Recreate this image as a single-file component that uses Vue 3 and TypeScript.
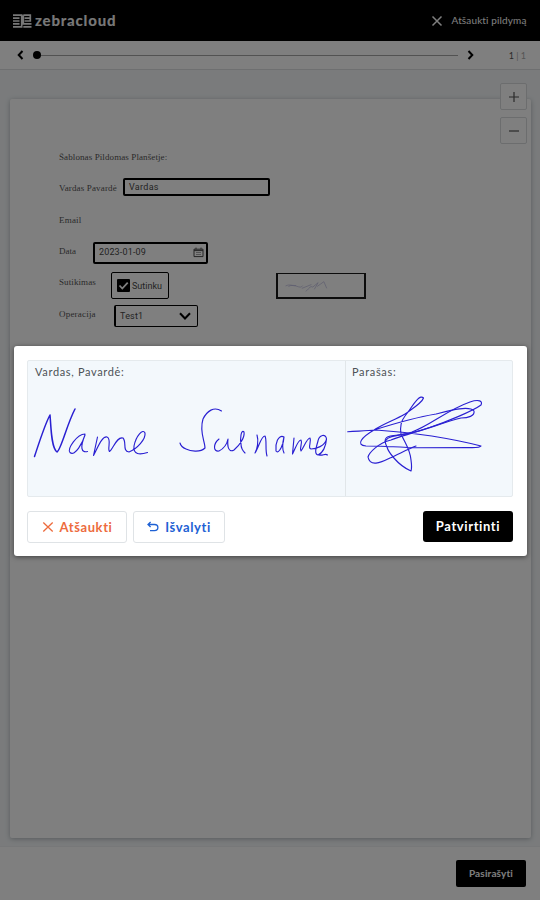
<script setup lang="ts">
import { ref } from 'vue'

const fullName = ref('Vardas')
const agreed = ref(true)
</script>

<template>
  <div class="screen">
    <header class="topbar">
      <div class="brand">
        <svg class="brand-mark" viewBox="0 0 19 14" aria-hidden="true">
          <path d="M0 1.2H8.7V12.8H0M0 4.1H6.5M0 7H6.5M0 9.9H6.5M10.3 1.2H17.3V7H11.6M11.6 4.1H17.3M10.3 1.2V9.9H18.5M10.3 12.8H18.5" />
        </svg>
        <span class="brand-name">zebracloud</span>
      </div>
      <div class="cancel">
        <svg viewBox="0 0 12 12" aria-hidden="true"><path d="M1.5 1.5L10.5 10.5M10.5 1.5L1.5 10.5" /></svg>
        <span>Atšaukti pildymą</span>
      </div>
    </header>

    <nav class="progress">
      <svg class="chevron" viewBox="0 0 7 10"><path d="M5.5 1L1.7 5L5.5 9" /></svg>
      <div class="track"><i class="dot"></i><i class="line"></i></div>
      <svg class="chevron" viewBox="0 0 7 10"><path d="M1.5 1L5.3 5L1.5 9" /></svg>
      <span class="pages">1 <em>| 1</em></span>
    </nav>

    <main class="workspace">
      <section class="page">
        <div class="row title"><span>Šablonas Pildomas Planšetje:</span></div>
        <div class="row name">
          <label>Vardas Pavardė</label>
          <div class="box name-box">{{ fullName }}</div>
        </div>
        <div class="row email"><label>Email</label></div>
        <div class="row date">
          <label>Data</label>
          <div class="box date-box">
            <span>2023-01-09</span>
            <svg viewBox="0 0 11 11"><path d="M1 2.2H10V9.6H1ZM1 3.6H10M3 .6V2.4M8 .6V2.4" /><path class="thin" d="M3 5.5H8M3 7.5H8" /></svg>
          </div>
        </div>
        <div class="row consent">
          <label>Sutikimas</label>
          <div class="box check-box">
            <svg viewBox="0 0 13 13"><rect width="13" height="13" rx="1" /><path v-if="agreed" d="M2.5 6.5L5.3 9.5L10.7 3.6" /></svg>
            <span>Sutinku</span>
          </div>
          <div class="box mini-sign">
            <svg viewBox="0 0 88 24">
              <path d="M7 12.5C12 10 14 13 18 12M10 13C17 9 22 17 25 12M24 15L34 11M28 18C31 17 31 13 35 13M35 14L41 9L37 16M40 13L47 8L50 15" />
            </svg>
          </div>
        </div>
        <div class="row operation">
          <label>Operacija</label>
          <div class="box select-box">
            <span>Test1</span>
            <svg viewBox="0 0 12 8"><path d="M1 1.2L6 6.5L11 1.2" /></svg>
          </div>
        </div>
      </section>
      <div class="zoom-controls">
        <button><svg viewBox="0 0 12 12"><path d="M1 6H11M6 1V11" /></svg></button>
        <button><svg viewBox="0 0 12 12"><path d="M1 6H11" /></svg></button>
      </div>
    </main>

    <footer class="bottombar"><button class="sign">Pasirašyti</button></footer>

    <div class="backdrop">
      <div class="modal">
        <div class="pads">
          <div class="pad"><span>Vardas, Pavardė:</span></div>
          <div class="pad"><span>Parašas:</span></div>
          <svg class="ink" viewBox="27 360 486 137" aria-hidden="true">
            <path class="heavy" d="M34.5 456.5C39 443 45 424 50 415C51 425 51 448 57 452C61 450 67 424 75 409" />
            <path d="M85 434C77 434 67 449 70 452.5C75 457 83 442 85 435C80 447 81 453 87.5 451.5" />
            <path d="M97.5 437L93.5 455.5C98 447 102 436 107 437C112 439 107 449 109.5 451.5C113 449 117 436 123 438C127 442 122 451 129 452C137 449 146 439 145 433C143 428 136 436 134 446C133 455 140 455 147.5 452.5" />
            <path d="M221.5 411C214 406 207 411 203 419C199 432 205 441 205 448C200 453 190 451 186 449Q181 447 180 443" />
            <path d="M219 439C213 444 213 452 219 451C225 448 227 444 228 439C227 447 229 453 234 450C240 445 245 437 244 432C241 429 240 439 241 444C241 449 243 451 245 453" />
            <path d="M257 435C259 441 257 450 255 453C259 447 261 436 265 436C267 440 265 449 267 456" />
            <path d="M284 437C278 434 275 444 276 451C279 455 284 443 284 437C282 445 282 449 284 453" />
            <path d="M294 438L292.5 454C296 447 298 440 301 440C303 443 299 448 301 451C304 447 307 438 310 438C312 442 307 448 311 449C316 449 325 446 326.5 439C326 433 319 435 318 441C316 448 314 454 318 455C323 453 326 446 326.5 439M319 455C323 456 325 453 327.5 455" />
            <path d="M347.7 431.7C359 431 366 431 376 430C404 432 438 435 481 446C480 448 474 447.5 469 447.6L416 447.8C401 447 382 446 366 446C355 445 362 437 374 430C385 423 395 420 405 414C412 409 422 403 423.5 398C419 393 411 409 405 416C401 421 400 428 401 434C406 445 410 449 411 460C412 467 412 468 411 471C397 465 388 451 387 447C382 437 387 436 398 435C417 434 437 424 461 418C468 418 475 416 474 411C469 405 448 411 436 414C418 417 393 424 374 430" />
            <path d="M385 442C387 435 400 436 412 432C431 425 447 410 470 402C479 399 483 401 481 405C473 411 446 422 431 427C411 434 401 436 391 440C378 443 369 453 368 457C370 467 380 463 390 458C399 454 408 449 416 446" />
          </svg>
        </div>
        <div class="actions">
          <button class="outline danger">
            <svg viewBox="0 0 12 12"><path d="M1.3 1.5L10.7 10.5M10.7 1.5L1.3 10.5" /></svg><span>Atšaukti</span>
          </button>
          <button class="outline info">
            <svg viewBox="0 0 12 12"><path d="M3.6 1L1 3.5L3.6 6M1 3.5H7.5C12 3.5 12 9.7 7.5 9.7H3" /></svg><span>Išvalyti</span>
          </button>
          <button class="confirm">Patvirtinti</button>
        </div>
      </div>
    </div>
  </div>
</template>

<style>
body { margin: 0; }
</style>

<style scoped>
* { box-sizing: border-box; }
.screen {
  position: relative;
  display: flex;
  flex-direction: column;
  width: 540px;
  height: 900px;
  overflow: hidden;
  background: #f4f7f9;
  font-family: Lato, "Open Sans", sans-serif;
}
svg { fill: none; stroke: currentColor; flex: none; display: block; }
button { font-family: inherit; padding: 0; margin: 0; white-space: nowrap; }
.topbar {
  display: flex;
  align-items: center;
  justify-content: space-between;
  height: 41px;
  padding: 0 13.5px 0 13px;
  background: #000;
  color: #fff;
}
.brand { display: flex; align-items: center; gap: 3px; color: #eee; }
.brand-mark { width: 19px; height: 14px; stroke-width: 1.7; }
.brand-name { font: 900 15px/20px Lato, sans-serif; letter-spacing: .78px; padding-bottom: 2px; }
.cancel { display: flex; align-items: center; gap: 9px; font-size: 10px; letter-spacing: .13px; }
.cancel svg { width: 12px; height: 12px; stroke-width: 1.5; }
.cancel span { padding-bottom: 1px; }
.progress {
  display: flex;
  align-items: center;
  height: 29px;
  padding: 0 14px 0 17px;
  background: #fff;
  border-bottom: 1px solid #dcdfe1;
}
.chevron { width: 7px; height: 10px; stroke-width: 2; color: #000; }
.track { display: flex; align-items: center; width: 425px; margin: 0 9px 0 9px; }
.dot { width: 8px; height: 8px; border-radius: 50%; background: #000; }
.line { flex: 1; height: 1px; background: #a4a4a4; }
.pages { margin-left: auto; font-size: 9px; color: #555; white-space: nowrap; }
.pages em { font-style: normal; color: #aaa; }
.workspace { position: relative; flex: 1; padding: 29px 9px 8px 10px; }
.page {
  height: 739px;
  padding: 50px 0 0 49px;
  background: #fff;
  border-radius: 2px;
  box-shadow: 0 1px 5px rgba(50, 60, 70, .35);
}
.row { display: flex; align-items: flex-start; font: 9px/16px "Liberation Serif", serif; white-space: nowrap; color: #555; }
.box {
  display: flex;
  align-items: center;
  border: 1.5px solid #000;
  border-radius: 2px;
  font: 9px/12px Roboto, sans-serif;
  color: #484848;
}
.title { height: 16px; letter-spacing: .1px; }
.name { height: 18px; margin-top: 13px; }
.name label { width: 64px; padding-top: 2px; letter-spacing: .15px; }
.name-box { width: 147px; height: 18px; padding-left: 4px; border-width: 2px; letter-spacing: .3px; }
.email { height: 16px; margin-top: 16px; letter-spacing: .2px; }
.date { height: 22px; margin-top: 14px; }
.date label { width: 34px; padding-top: 1px; }
.date-box { width: 115px; height: 22px; padding: 0 2px 2px 4px; justify-content: space-between; border-width: 2px; letter-spacing: .15px; }
.date-box svg { width: 11px; height: 11px; }
.thin { stroke-width: .5; }
.consent { height: 27px; margin-top: 8px; }
.consent label { width: 52px; padding-top: 2px; letter-spacing: .1px; }
.check-box { width: 58px; height: 27px; padding-left: 5px; gap: 2px; }
.check-box svg { width: 13px; height: 13px; }
.check-box rect { fill: #000; stroke: none; }
.check-box path { stroke: #fff; stroke-width: 1.8; }
.mini-sign { width: 90px; height: 26px; margin: 1px 0 0 107px; border-radius: 0; border-width: 2px; border-top-width: 1px; border-color: #181818; }
.mini-sign svg { width: 86px; height: 23px; stroke: #b8b7dd; stroke-width: .7; }
.operation { height: 21px; margin-top: 6px; }
.operation label { width: 55px; padding-top: 1px; letter-spacing: .2px; }
.select-box { width: 84px; height: 22px; padding: 0 6px 0 4px; justify-content: space-between; border-left-width: 2px; letter-spacing: .2px; }
.select-box svg { width: 12px; height: 8px; stroke: #000; stroke-width: 2; }
.zoom-controls { position: absolute; top: 13px; right: 13px; display: grid; gap: 7px; }
.zoom-controls button {
  display: grid;
  place-items: center;
  width: 27px;
  height: 27px;
  border: 1px solid #d8dbdd;
  border-radius: 2px;
  background: #fff;
  color: #555;
}
.zoom-controls svg { width: 12px; height: 12px; stroke-width: 1.2; }
.bottombar {
  display: flex;
  align-items: center;
  justify-content: flex-end;
  height: 54px;
  padding: 0 14px 1px 0;
  background: #fff;
  border-top: 1px solid #eef0f2;
}
.sign {
  width: 70px;
  height: 27px;
  border: 0;
  border-radius: 2px;
  background: #000;
  color: #fff;
  font-size: 10px;
  font-weight: 700;
  letter-spacing: .15px;
}
.backdrop { position: absolute; inset: 0; padding: 346px 13px 0 14px; background: rgba(0, 0, 0, .5); }
.modal {
  height: 210px;
  padding: 14px 14px 0 13px;
  background: #fff;
  border-radius: 3px;
  box-shadow: 0 1px 5px rgba(0, 0, 0, .5);
}
.pads {
  position: relative;
  display: grid;
  grid-template-columns: 317px 1fr;
  height: 137px;
  border: 1px solid #e5eaed;
  border-radius: 2px;
  background: #f3f8fc;
}
.pad { padding: 3px 0 0 7px; font-size: 11px; line-height: 15px; color: #4d5257; }
.pad + .pad { padding-left: 6px; border-left: 1px solid #e1e6e9; }
.pad span { letter-spacing: .66px; }
.ink { position: absolute; top: -1px; left: -1px; width: 486px; height: 137px; stroke: #2a20d2; stroke-width: 1.15; stroke-linecap: round; stroke-linejoin: round; }
.heavy { stroke-width: 1.5; }
.actions { display: flex; gap: 6px; margin-top: 14px; }
.actions button {
  display: flex;
  align-items: center;
  justify-content: center;
  gap: 6px;
  height: 32px;
  padding-bottom: 1px;
  border-radius: 3px;
  font-size: 13px;
  font-weight: 700;
  letter-spacing: .6px;
}
.outline { border: 1px solid #dfe3e6; background: #fff; }
.danger { width: 100px; color: #ed6b3d; }
.info { width: 92px; color: #1e61d4; }
.actions svg { width: 12px; height: 12px; stroke-width: 1.3; }
.actions .confirm { width: 90px; height: 31px; margin-left: auto; border: 0; background: #000; color: #fff; }
</style>
